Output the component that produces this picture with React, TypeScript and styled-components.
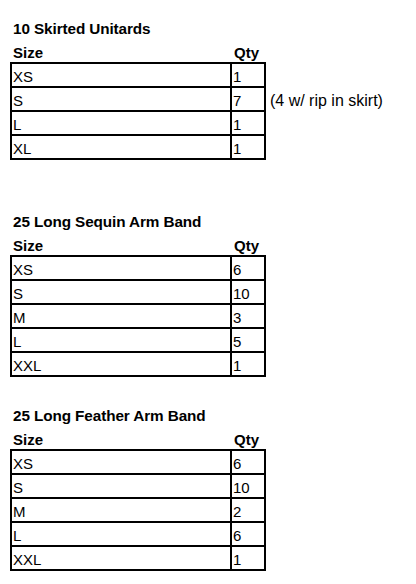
import React from 'react'
import styled, { createGlobalStyle } from 'styled-components'

const GlobalStyle = createGlobalStyle`
  html, body {
    margin: 0;
    padding: 0;
    background: #ffffff;
  }
  body {
    font-family: "Liberation Sans", Arial, sans-serif;
    color: #000000;
  }
`

const Page = styled.div`
  padding: 14px 0 0 10px;
  display: flex;
  flex-direction: column;
`

const Section = styled.section<{ $gap: number }>`
  display: flex;
  flex-direction: column;
  margin-bottom: ${(p) => p.$gap}px;
`

const Title = styled.div`
  height: 24px;
  display: flex;
  align-items: flex-end;
  padding: 0 0 1px 3px;
  box-sizing: border-box;
  font-size: 15.3px;
  line-height: 17px;
  font-weight: 700;
  letter-spacing: -0.1px;
`

const Grid = styled.div`
  display: grid;
  grid-template-columns: 222px 34px auto;
`

const HeadCell = styled.div<{ $pad: number }>`
  height: 24px;
  display: flex;
  align-items: flex-end;
  padding: 0 0 1px ${(p) => p.$pad}px;
  box-sizing: border-box;
  font-size: 15px;
  line-height: 17px;
  font-weight: 700;
`

const Cell = styled.div<{ $first: boolean; $left?: boolean }>`
  height: ${(p) => (p.$first ? 26 : 24)}px;
  box-sizing: border-box;
  display: flex;
  align-items: flex-end;
  padding: 0 0 1px 1px;
  font-size: 15px;
  line-height: 17px;
  border-bottom: 2px solid #000;
  border-right: 2px solid #000;
  border-top: ${(p) => (p.$first ? '2px solid #000' : 'none')};
  border-left: ${(p) => (p.$left ? '2px solid #000' : 'none')};
`

const Note = styled.div<{ $first: boolean }>`
  height: ${(p) => (p.$first ? 26 : 24)}px;
  box-sizing: border-box;
  display: flex;
  align-items: flex-end;
  padding: 0 0 3px 4px;
  font-size: 16px;
  line-height: 17px;
  white-space: nowrap;
`

type Row = { size: string; qty: string; note?: string }

const sections: { title: string; rows: Row[]; gap: number }[] = [
  {
    title: '10 Skirted Unitards',
    gap: 47,
    rows: [
      { size: 'XS', qty: '1' },
      { size: 'S', qty: '7', note: '(4 w/ rip in skirt)' },
      { size: 'L', qty: '1' },
      { size: 'XL', qty: '1' },
    ],
  },
  {
    title: '25 Long Sequin Arm Band',
    gap: 24,
    rows: [
      { size: 'XS', qty: '6' },
      { size: 'S', qty: '10' },
      { size: 'M', qty: '3' },
      { size: 'L', qty: '5' },
      { size: 'XXL', qty: '1' },
    ],
  },
  {
    title: '25 Long Feather Arm Band',
    gap: 0,
    rows: [
      { size: 'XS', qty: '6' },
      { size: 'S', qty: '10' },
      { size: 'M', qty: '2' },
      { size: 'L', qty: '6' },
      { size: 'XXL', qty: '1' },
    ],
  },
]

export default function App() {
  return (
    <>
      <GlobalStyle />
      <Page>
        {sections.map((s) => (
          <Section key={s.title} $gap={s.gap}>
            <Title>{s.title}</Title>
            <Grid>
              <HeadCell $pad={3}>Size</HeadCell>
              <HeadCell $pad={2}>Qty</HeadCell>
              <div />
              {s.rows.map((r, i) => (
                <React.Fragment key={r.size}>
                  <Cell $first={i === 0} $left>
                    {r.size}
                  </Cell>
                  <Cell $first={i === 0}>{r.qty}</Cell>
                  <Note $first={i === 0}>{r.note}</Note>
                </React.Fragment>
              ))}
            </Grid>
          </Section>
        ))}
      </Page>
    </>
  )
}
